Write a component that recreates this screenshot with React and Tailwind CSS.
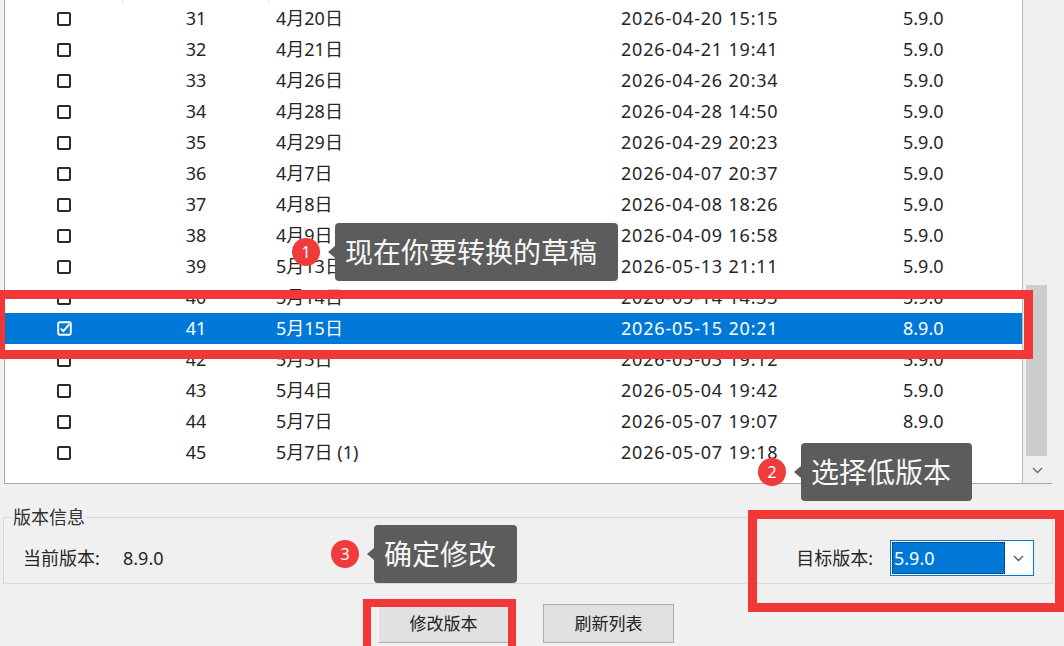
import React from "react";

const rows = [
  [31, "4月20日", "2026-04-20 15:15", "5.9.0"],
  [32, "4月21日", "2026-04-21 19:41", "5.9.0"],
  [33, "4月26日", "2026-04-26 20:34", "5.9.0"],
  [34, "4月28日", "2026-04-28 14:50", "5.9.0"],
  [35, "4月29日", "2026-04-29 20:23", "5.9.0"],
  [36, "4月7日", "2026-04-07 20:37", "5.9.0"],
  [37, "4月8日", "2026-04-08 18:26", "5.9.0"],
  [38, "4月9日", "2026-04-09 16:58", "5.9.0"],
  [39, "5月13日", "2026-05-13 21:11", "5.9.0"],
  [40, "5月14日", "2026-05-14 14:33", "5.9.0"],
  [41, "5月15日", "2026-05-15 20:21", "8.9.0"],
  [42, "5月3日", "2026-05-03 19:12", "5.9.0"],
  [43, "5月4日", "2026-05-04 19:42", "5.9.0"],
  [44, "5月7日", "2026-05-07 19:07", "8.9.0"],
  [45, "5月7日 (1)", "2026-05-07 19:18", "5.9.0"],
];

const SELECTED = 41;

function Check({ checked }) {
  if (checked) {
    return (
      <svg width="15" height="15" viewBox="0 0 15 15" className="block">
        <rect x="1.2" y="1.2" width="12.6" height="12.6" rx="1.5" fill="none" stroke="#ffffff" strokeWidth="1.9" />
        <path d="M3.8 7.6 L6.4 10.2 L12.4 3.2" fill="none" stroke="#ffffff" strokeWidth="1.9" />
      </svg>
    );
  }
  return <div className="w-[14px] h-[14px] border-2 border-[#2a2a2a] rounded-[2px]" />;
}

function Chevron({ color = "#5a5a5a" }) {
  return (
    <svg width="11" height="7" viewBox="0 0 11 7" className="block">
      <path d="M1 1 L5.5 5.5 L10 1" fill="none" stroke={color} strokeWidth="1.4" />
    </svg>
  );
}

function Callout({ n, text, left, top, boxW }) {
  return (
    <div className="absolute flex items-center" style={{ left, top }}>
      <div className="w-[28px] h-[28px] rounded-full bg-[#ef3b3b] text-white text-[16px] leading-none flex items-center justify-center">
        {n}
      </div>
      <div className="ml-[8px] w-0 h-0 border-y-[6px] border-y-transparent border-r-[7px] border-r-[#5c5c5c]" />
      <div
        className="h-[58px] rounded-[4px] bg-[#5c5c5c] text-[#f7f7f7] text-[28px] leading-none flex items-center pl-[10px]"
        style={{ width: boxW }}
      >
        {text}
      </div>
    </div>
  );
}

export default function App() {
  return (
    <div
      className="relative w-[1064px] h-[646px] overflow-hidden bg-[#f0f0f0] text-[#262626]"
      style={{ fontFamily: "'Noto Sans', 'Noto Sans CJK SC', sans-serif" }}
    >
      {/* list view with vertical scrollbar */}
      <div className="ml-[4px] w-[1048px] h-[484px] flex bg-white border-l border-b border-[#a8a8a8]">
        <div className="flex-1 flex flex-col">
          <div className="h-[3px] grid grid-cols-[118px_146px_345px_282px_1fr]">
            <div className="border-r border-[#e3e3e3]" />
            <div className="border-r border-[#e3e3e3]" />
            <div />
            <div />
            <div />
          </div>
          {rows.map(([id, name, date, ver]) => {
            const sel = id === SELECTED;
            return (
              <div
                key={id}
                className={
                  "h-[31px] grid grid-cols-[118px_146px_345px_282px_1fr] items-center text-[18px] " +
                  (sel ? "bg-[#0078d7] text-white" : "")
                }
              >
                <div className="flex justify-center">
                  <Check checked={sel} />
                </div>
                <div className="text-center">{id}</div>
                <div className="pl-[7px] whitespace-nowrap">{name}</div>
                <div className="pl-[7px] whitespace-nowrap tracking-[0.8px]">{date}</div>
                <div className="pl-[7px]">{ver}</div>
              </div>
            );
          })}
        </div>
        <div className="w-[30px] border-l border-[#bdbdbd] bg-[#f0f0f0] flex flex-col">
          <div className="flex-1">
            <div className="mt-[285px] ml-[3px] w-[21px] h-[171px] bg-[#cdcdcd]" />
          </div>
          <div className="h-[26px] flex items-center justify-center">
            <Chevron color="#6a6a6a" />
          </div>
        </div>
      </div>

      {/* version info group */}
      <fieldset className="mt-[22px] ml-[3px] w-[1050px] border border-[#d9d9d9] px-0">
        <legend className="ml-[8px] px-[1px] text-[18px] leading-[22px] text-[#303030]">版本信息</legend>
        <div className="pt-[12px] pb-[7px] flex items-center text-[18px]">
          <span className="ml-[19px] w-[100px]">当前版本:</span>
          <span>8.9.0</span>
          <span className="ml-auto mr-[17px]">目标版本:</span>
          <div className="mr-[18px] w-[144px] h-[36px] border border-[#0078d7] bg-white flex items-center p-[1px]">
            <div className="w-[113px] h-full bg-[#0078d7] text-white flex items-center pl-[2px] outline-1 outline-dotted outline-[#1a1a1a] -outline-offset-1">
              5.9.0
            </div>
            <div className="flex-1 flex justify-center">
              <Chevron />
            </div>
          </div>
        </div>
      </fieldset>

      {/* action buttons */}
      <div className="mt-[20px] flex pl-[378px] gap-[34px]">
        <button className="w-[131px] h-[39px] bg-[#e1e1e1] border border-[#adadad] border-l-[#f5f5f5] text-[17px] text-[#222]">
          修改版本
        </button>
        <button className="w-[131px] h-[39px] bg-[#e1e1e1] border border-[#adadad] text-[17px] text-[#222]">
          刷新列表
        </button>
      </div>

      {/* annotation frames */}
      <div className="absolute left-[-4px] top-[290px] w-[1037px] h-[69px] border-[9px] border-[#f23737]" />
      <div className="absolute left-[748px] top-[510px] w-[316px] h-[102px] border-[9px] border-[#f23737]" />
      <div className="absolute left-[363px] top-[599px] w-[153px] h-[60px] border-[8px] border-[#f23737]" />

      {/* step callouts */}
      <Callout n="1" text="现在你要转换的草稿" left={292} top={223} boxW={283} />
      <Callout n="2" text="选择低版本" left={758} top={443} boxW={171} />
      <Callout n="3" text="确定修改" left={331} top={525} boxW={143} />
    </div>
  );
}
